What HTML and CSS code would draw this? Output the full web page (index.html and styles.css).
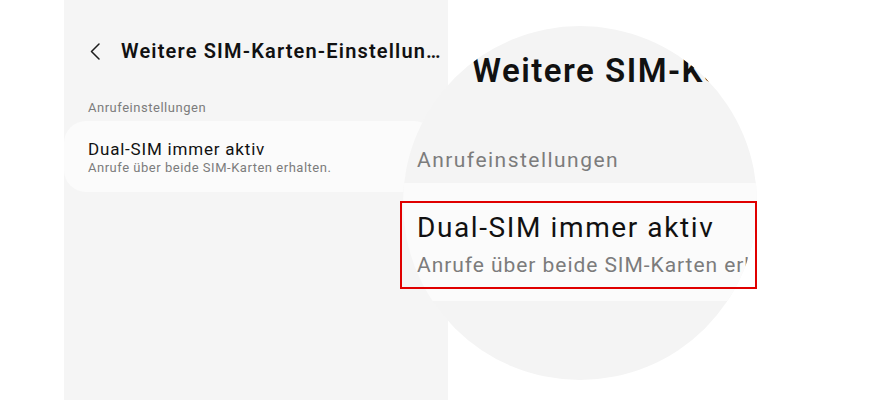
FILE: index.html
```html
<!DOCTYPE html>
<html lang="de">
<head>
    <meta charset="UTF-8">
    <meta name="viewport" content="width=device-width, initial-scale=1.0">
    <title>Weitere SIM-Karten-Einstellungen</title>
    <link rel="stylesheet" href="styles.css">
</head>
<body>
    <div class="stage">
        <!-- Phone screen -->
        <div class="screen">
            <div class="header">
                <svg class="back" width="10" height="17" viewBox="0 0 10 17">
                    <polyline points="9,1 1.5,8.5 9,16" fill="none" stroke="#1c1c1c" stroke-width="1.5" stroke-linecap="round" stroke-linejoin="round"/>
                </svg>
                <span class="title">Weitere SIM-Karten-Einstellun…</span>
            </div>
            <div class="section">Anrufeinstellungen</div>
            <div class="card">
                <div class="item-title">Dual-SIM immer aktiv</div>
                <div class="item-sub">Anrufe über beide SIM-Karten erhalten.</div>
            </div>
        </div>

        <!-- Magnifier -->
        <div class="lens">
            <div class="lens-title">Weitere SIM-Karten</div>
            <div class="lens-section">Anrufeinstellungen</div>
            <div class="lens-card">
                <div class="lens-item-title">Dual-SIM immer aktiv</div>
                <div class="lens-item-sub">Anrufe über beide SIM-Karten erhalten.</div>
            </div>
        </div>
        <div class="highlight"></div>
    </div>
</body>
</html>
```

FILE: styles.css
```css
body { margin: 0; background-color: #ffffff; font-family: Roboto, "Liberation Sans", sans-serif; letter-spacing: 0.05em; }
.stage { position: relative; width: 879px; height: 400px; overflow: hidden; padding-left: 64px; box-sizing: border-box; }
.screen { width: 384px; height: 400px; background-color: #f5f5f5; padding-top: 39px; box-sizing: border-box; }
.header { display: flex; align-items: center; height: 24px; padding-left: 26px; gap: 21px; }
.back { display: block; margin-top: 1px; }
.title { font-size: 20px; line-height: 24px; font-weight: 600; color: #111; white-space: nowrap; letter-spacing: 0.058em; }
.section { margin-top: 37px; padding-left: 24px; font-size: 13px; line-height: 16px; color: #7c7c7c; letter-spacing: 0.04em; }
.card { margin-top: 5px; margin-right: 12px; padding: 17px 24px 16px; background-color: #fbfbfb; border-radius: 22px; }
.item-title { font-size: 17px; line-height: 22px; color: #111; }
.item-sub { font-size: 13px; line-height: 16px; color: #7c7c7c; letter-spacing: 0.04em; }
.lens { position: absolute; left: 403px; top: 26px; width: 354px; height: 354px; border-radius: 50%; background-color: #f4f4f4; overflow: hidden; padding-top: 25px; box-sizing: border-box; }
.lens-title { padding-left: 69px; font-size: 33px; line-height: 40px; font-weight: 600; color: #111; white-space: nowrap; letter-spacing: 0.045em; }
.lens-section { margin-top: 56px; padding-left: 14px; font-size: 21px; line-height: 26px; color: #7c7c7c; letter-spacing: 0.07em; }
.lens-card { margin-top: 10px; padding: 28px 14px 23px; background-color: #fbfbfb; white-space: nowrap; }
.lens-item-title { font-size: 28px; line-height: 34px; color: #111; letter-spacing: 0.057em; }
.lens-item-sub { margin-top: 7px; font-size: 21px; line-height: 26px; color: #7c7c7c; letter-spacing: 0.045em; }
.highlight { position: absolute; left: 400px; top: 201px; width: 357px; height: 88px; border: 2px solid #e00000; box-sizing: border-box; }
```
